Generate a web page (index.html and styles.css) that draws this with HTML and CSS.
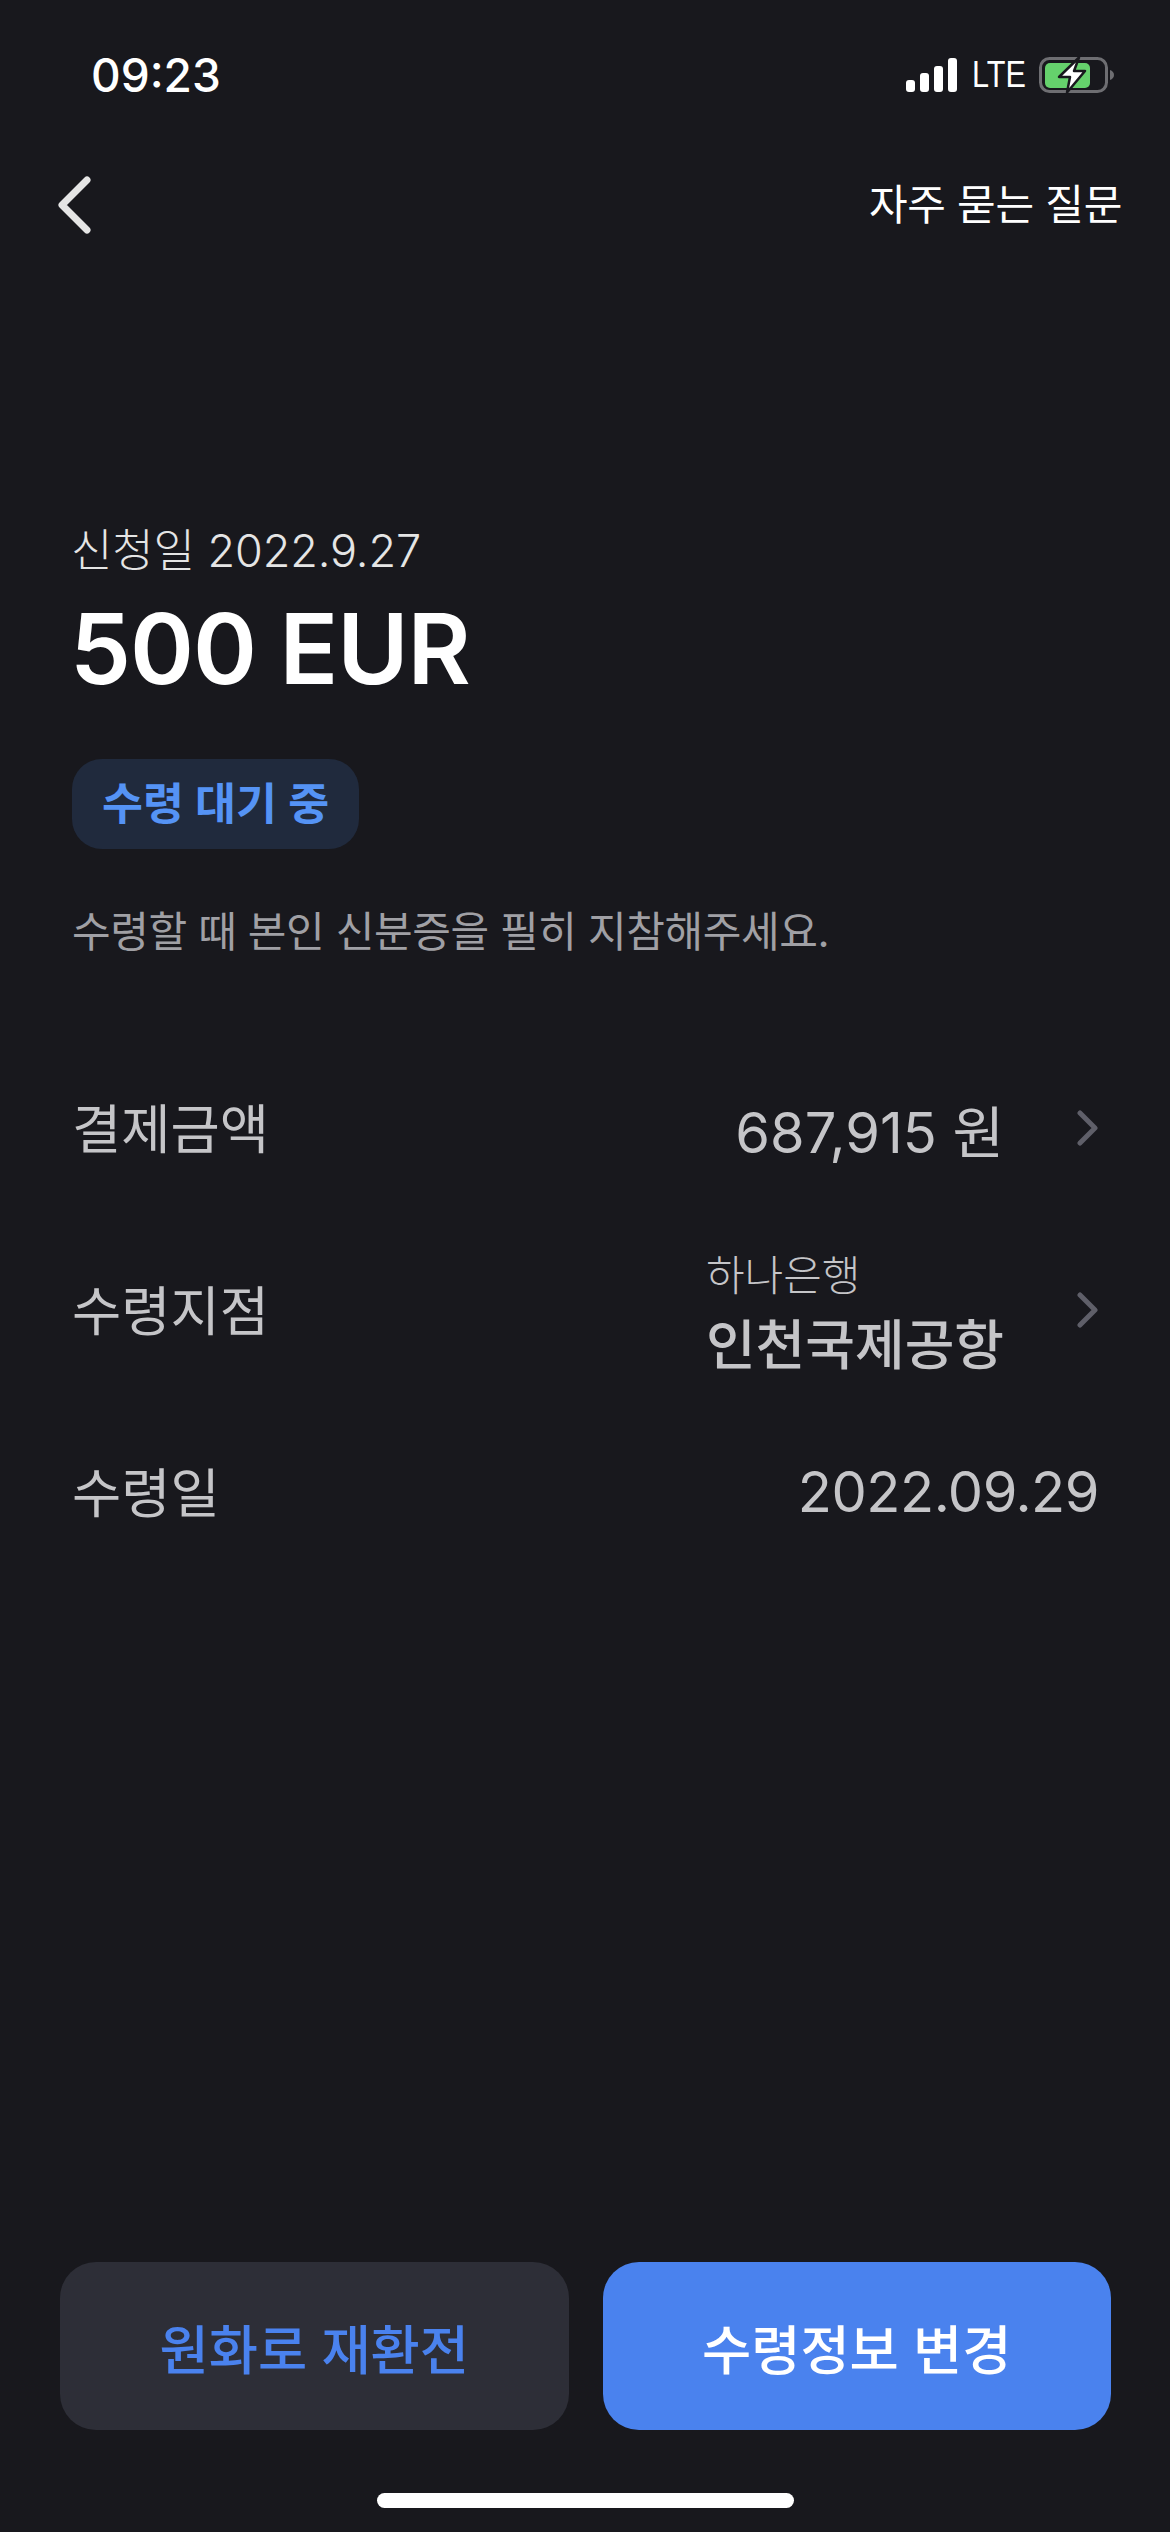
FILE: index.html
```html
<!DOCTYPE html>
<html lang="ko">
<head>
	<meta charset="UTF-8">
	<title>수령 대기 중</title>
	<link rel="stylesheet" href="styles.css">
</head>
<body>
	<div class="screen">
		<div class="status">
			<span class="clock">09:23</span>
			<div class="status-right">
				<svg class="signal" width="51" height="34" viewBox="0 0 51 34">
					<rect x="0" y="22" width="9" height="12" rx="3"/>
					<rect x="14" y="15" width="9" height="19" rx="3"/>
					<rect x="28" y="8" width="9" height="26" rx="3"/>
					<rect x="42" y="0" width="9" height="34" rx="3"/>
				</svg>
				<span class="lte">LTE</span>
				<svg class="battery" width="76" height="38" viewBox="0 0 76 38">
					<rect x="1.500" y="2.500" width="66" height="33" rx="9" fill="none" stroke="#6e6e72" stroke-width="3"/>
					<path d="M71 14c2.500 1 4 2.500 4 5s-1.500 4-4 5z" fill="#6e6e72"/>
					<rect x="6" y="7" width="45" height="25" rx="5" fill="#65d16c"/>
					<path d="M40 1.500 20 21h11l-3 15.500L46 15H35z" fill="#fff" stroke="#18181d" stroke-width="2.500" stroke-linejoin="round"/>
				</svg>
			</div>
		</div>
		<div class="nav">
			<svg class="back" width="34" height="58" viewBox="0 0 34 58">
				<path d="M29 4 4 29l25 25" fill="none" stroke="#e5e5e5" stroke-width="7" stroke-linecap="round" stroke-linejoin="round"/>
			</svg>
			<span class="faq">자주 묻는 질문</span>
		</div>
		<div class="summary">
			<p class="applied">신청일 2022.9.27</p>
			<h1 class="amount">500 EUR</h1>
			<span class="badge">수령 대기 중</span>
			<p class="notice">수령할 때 본인 신분증을 필히 지참해주세요.</p>
		</div>
		<div class="details">
			<div class="row row-pay">
				<span class="label">결제금액</span>
				<div class="value-wrap">
					<span class="value">687,915 원</span>
					<svg class="chev" width="22" height="36" viewBox="0 0 22 36"><path d="M3 3l15 15L3 33" fill="none" stroke="#5f5f69" stroke-width="5" stroke-linecap="round" stroke-linejoin="round"/></svg>
				</div>
			</div>
			<div class="row row-branch">
				<span class="label">수령지점</span>
				<div class="value-wrap">
					<div class="branch">
						<span class="bank">하나은행</span>
						<span class="place">인천국제공항</span>
					</div>
					<svg class="chev" width="22" height="36" viewBox="0 0 22 36"><path d="M3 3l15 15L3 33" fill="none" stroke="#5f5f69" stroke-width="5" stroke-linecap="round" stroke-linejoin="round"/></svg>
				</div>
			</div>
			<div class="row row-date">
				<span class="label">수령일</span>
				<span class="value">2022.09.29</span>
			</div>
		</div>
		<div class="actions">
			<button class="btn btn-dark">원화로 재환전</button>
			<button class="btn btn-blue">수령정보 변경</button>
		</div>
		<div class="home-bar"></div>
	</div>
</body>
</html>
```
FILE: styles.css
```css
* { margin: 0; padding: 0; box-sizing: border-box; }
body { background: #18181d; font-family: Inter, "Noto Sans CJK KR", sans-serif; color: #fff; }
.screen { width: 1170px; height: 2532px; display: flex; flex-direction: column; overflow: hidden; }

.status { height: 150px; padding: 44px 55px 0 91px; display: flex; justify-content: space-between; align-items: flex-start; }
.clock { font-size: 46px; font-weight: 500; line-height: 62px; }
.status-right { display: flex; align-items: center; gap: 15px; padding-top: 11px; }
.signal { fill: #fff; }
.lte { width: 52px; font-size: 36px; font-weight: 500; line-height: 40px; font-family: "Liberation Sans", sans-serif; transform: scaleX(.85); transform-origin: left; }

.nav { height: 110px; padding: 0 48px 0 58px; display: flex; justify-content: space-between; align-items: center; }
.faq { font-size: 42px; line-height: 60px; letter-spacing: -.3px; }

.summary { padding: 256px 72px 0; display: flex; flex-direction: column; align-items: flex-start; }
.applied { font-size: 45px; line-height: 70px; color: #e5e5e5; font-weight: 300; margin-left: -1px; letter-spacing: -.1px; }
.amount { font-size: 97px; line-height: 120px; font-weight: 600; letter-spacing: -1px; margin: 3px 0 0 -2px; }
.badge { margin-top: 50px; height: 90px; padding: 0 30px; border-radius: 30px; background: #202a3d; color: #5593f5; font-size: 44.500px; font-weight: 600; line-height: 90px; }
.notice { margin-top: 48px; font-size: 42px; line-height: 70px; color: #a0a0a5; letter-spacing: -.4px; }

.details { padding: 0 71px 0 72px; margin-top: 111px; }
.row { display: flex; justify-content: space-between; align-items: center; color: #c5c5c8; }
.row-pay { height: 100px; }
.row-branch { height: 180px; margin-top: 42px; }
.row-date { height: 100px; margin-top: 42px; }
.label { font-size: 53.500px; padding-bottom: 6px; }
.value { font-size: 56px; }
.row-date .value { letter-spacing: -.5px; }
.value-wrap { display: flex; align-items: center; gap: 73px; }
.branch { display: flex; flex-direction: column; padding-top: 6px; }
.bank { font-size: 42px; font-weight: 300; line-height: 66px; }
.place { font-size: 54px; font-weight: 500; line-height: 74px; }

.actions { margin-top: auto; padding: 0 59px 0 60px; display: flex; gap: 34px; }
.btn { flex: 1; height: 168px; border: 0; border-radius: 36px; font-family: inherit; font-size: 53.500px; font-weight: 500; }
.btn-dark { background: #2d2e37; color: #4a82ee; }
.btn-blue { background: #4a82ee; color: #fff; }

.home-bar { width: 417px; height: 15px; border-radius: 8px; background: #fff; margin: 63px auto 24px; }
```
